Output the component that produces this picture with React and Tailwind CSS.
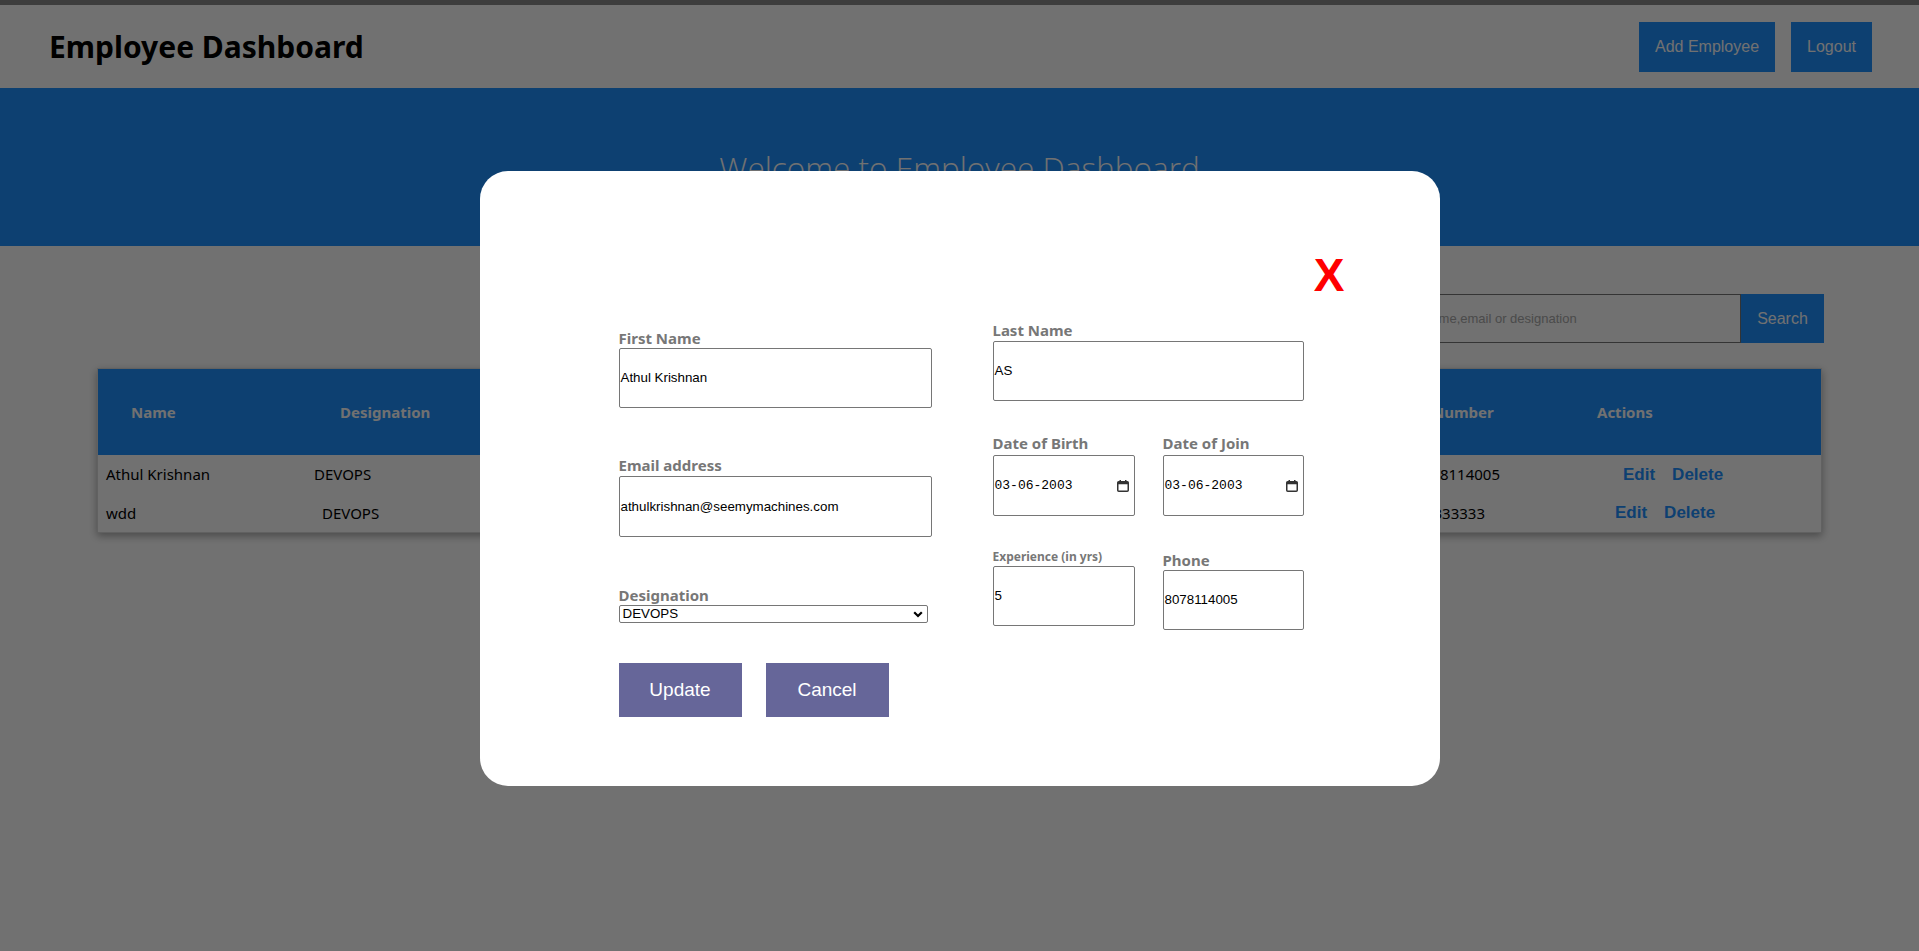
import React from "react";

const CalendarIcon = () => (
  <svg width="12" height="12" viewBox="0 0 12 12" className="shrink-0">
    <rect x="0.75" y="1.75" width="10.5" height="9.5" rx="1" fill="none" stroke="#333" strokeWidth="1.5" />
    <rect x="0.75" y="1.75" width="10.5" height="2.5" fill="#333" />
    <rect x="2.5" y="0" width="1.5" height="2.5" fill="#333" />
    <rect x="8" y="0" width="1.5" height="2.5" fill="#333" />
  </svg>
);

const Chevron = () => (
  <svg width="10" height="7" viewBox="0 0 10 7" className="shrink-0">
    <path d="M1.2 1.2L5 5l3.8-3.8" stroke="#000" strokeWidth="2.2" fill="none" />
  </svg>
);

const Label = ({ children }) => (
  <div className="h-[18px] leading-[18px] text-[15px] font-bold text-[#777777] whitespace-nowrap">{children}</div>
);

const TextBox = ({ value, className }) => (
  <div
    className={
      "flex items-center border border-[#767676] rounded-[2px] bg-white px-[1px] font-['Liberation_Sans',Arial,sans-serif] text-[13.33px] text-black " +
      className
    }
  >
    {value}
  </div>
);

const DateBox = ({ value, className }) => (
  <div
    className={
      "flex items-center justify-between border border-[#767676] rounded-[2px] bg-white pl-[1px] pr-[5px] font-['Liberation_Mono',monospace] text-[13px] text-black " +
      className
    }
  >
    <span>{value}</span>
    <CalendarIcon />
  </div>
);

export default function App() {
  return (
    <div className="relative min-h-screen bg-white font-['Noto_Sans',sans-serif]">
      <div className="h-[5px] bg-[#8a8a8a]" />
      <header className="h-[83px] flex items-center justify-between pl-[49px] pr-[47px]">
        <h1 className="text-[30px] font-bold text-black">Employee Dashboard</h1>
        <div className="flex gap-4 font-['Liberation_Sans',Arial,sans-serif] text-[16px] text-white">
          <button className="h-[50px] w-[136px] bg-[#1e90ff]">Add Employee</button>
          <button className="h-[50px] w-[81px] bg-[#1e90ff]">Logout</button>
        </div>
      </header>
      <section className="h-[158px] bg-[#1e90ff] pt-[59px] text-center">
        <h2 className="font-['Open_Sans',sans-serif] font-light text-[31.5px] leading-[42px] text-white">
          Welcome to Employee Dashboard
        </h2>
      </section>

      <div className="px-[97px]">
        <div className="mt-[48px] flex justify-end mr-[-2px]">
          <input
            readOnly
            placeholder="Search by name,email or designation"
            className="h-[49px] w-[400px] border border-[#767676] pl-[20px] font-['Liberation_Sans',Arial,sans-serif] text-[13px] placeholder:text-[#a9a9a9] outline-none"
          />
          <button className="h-[49px] w-[83px] bg-[#1e90ff] text-white font-['Liberation_Sans',Arial,sans-serif] text-[16px]">
            Search
          </button>
        </div>

        <div className="mt-[25px] border border-[#dcdcdc] shadow-[0_3px_8px_rgba(0,0,0,0.35)] text-[15px]">
          <div className="h-[86px] flex items-center bg-[#1e90ff] text-white font-bold">
            <div className="w-[242px] pl-[33px]">Name</div>
            <div className="w-[1041px]">Designation</div>
            <div className="w-[216px]">Phone Number</div>
            <div>Actions</div>
          </div>
          <div className="h-[39px] flex items-center text-black">
            <div className="w-[216px] pl-[8px]">Athul Krishnan</div>
            <div className="w-[730px]">DEVOPS</div>
            <div className="w-[456px] text-right">8078114005</div>
            <div className="pl-[123px] flex font-['Liberation_Sans',Arial,sans-serif] font-bold text-[17px] text-[#1e90ff]">
              <span>Edit</span>
              <span className="ml-[17px]">Delete</span>
            </div>
          </div>
          <div className="h-[38px] flex items-center text-black">
            <div className="w-[224px] pl-[8px]">wdd</div>
            <div className="w-[730px]">DEVOPS</div>
            <div className="w-[433px] text-right">3333333333</div>
            <div className="pl-[130px] flex font-['Liberation_Sans',Arial,sans-serif] font-bold text-[17px] text-[#1e90ff]">
              <span>Edit</span>
              <span className="ml-[17px]">Delete</span>
            </div>
          </div>
        </div>
      </div>

      <div className="fixed inset-0 bg-[rgba(0,0,0,0.557)] flex justify-center items-start pt-[171px]">
        <div className="w-[960px] h-[615px] bg-white rounded-[28px]">
          <div className="pt-[81px] pr-[95px] flex justify-end">
            <span className="font-['Liberation_Sans',Arial,sans-serif] font-bold text-[46px] leading-none text-[#ff0000]">X</span>
          </div>
          <div className="mt-[23px] pl-[139px] flex items-start gap-[61px]">
            <div className="w-[313px] pt-[8px] flex flex-col">
              <Label>First Name</Label>
              <TextBox value="Athul Krishnan" className="mt-[1px] h-[60px] w-[313px]" />
              <div className="mt-[48px]">
                <Label>Email address</Label>
              </div>
              <TextBox value="athulkrishnan@seemymachines.com" className="mt-[2px] h-[61px] w-[313px]" />
              <div className="mt-[49px]">
                <Label>Designation</Label>
              </div>
              <div className="mt-[1px] h-[18px] w-[309px] flex items-center justify-between border border-[#767676] rounded-[2px] pl-[3px] pr-[4px] font-['Liberation_Sans',Arial,sans-serif] text-[13.33px] text-black">
                <span>DEVOPS</span>
                <Chevron />
              </div>
              <div className="mt-[40px] flex gap-[24px] font-['Liberation_Sans',Arial,sans-serif] text-[19px] text-white">
                <button className="h-[54px] w-[123px] bg-[#666699]">Update</button>
                <button className="h-[54px] w-[123px] bg-[#666699]">Cancel</button>
              </div>
            </div>
            <div className="w-[311px] flex flex-col">
              <Label>Last Name</Label>
              <TextBox value="AS" className="mt-[2px] h-[60px] w-[311px]" />
              <div className="mt-[33px] flex gap-[28px]">
                <div className="w-[142px] flex flex-col">
                  <Label>Date of Birth</Label>
                  <DateBox value="03-06-2003" className="mt-[3px] h-[61px] w-[142px]" />
                </div>
                <div className="w-[141px] flex flex-col">
                  <Label>Date of Join</Label>
                  <DateBox value="03-06-2003" className="mt-[3px] h-[61px] w-[141px]" />
                </div>
              </div>
              <div className="mt-[33px] flex items-start gap-[28px]">
                <div className="w-[142px] flex flex-col">
                  <div className="h-[15px] leading-[15px] text-[12px] font-bold text-[#777777] whitespace-nowrap">
                    Experience (in yrs)
                  </div>
                  <TextBox value="5" className="mt-[2px] h-[60px] w-[142px]" />
                </div>
                <div className="w-[141px] flex flex-col mt-[2px]">
                  <Label>Phone</Label>
                  <TextBox value="8078114005" className="mt-[1px] h-[60px] w-[141px]" />
                </div>
              </div>
            </div>
          </div>
        </div>
      </div>
    </div>
  );
}
